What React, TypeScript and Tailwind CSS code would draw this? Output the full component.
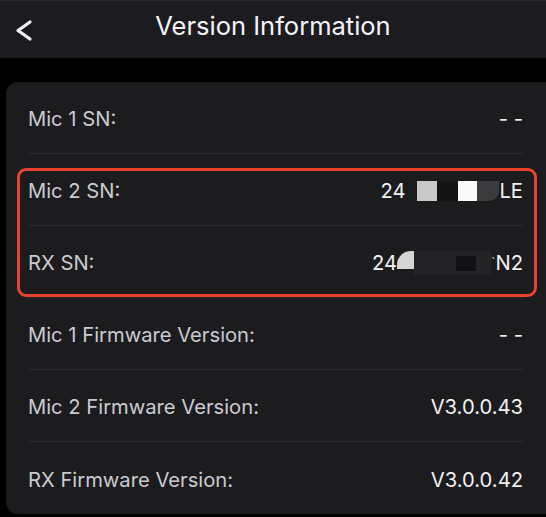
const rows = [
  { label: 'Mic 1 SN:', value: '- -' },
  { label: 'Mic 2 SN:', value: 'mic2' },
  { label: 'RX SN:', value: 'rx' },
  { label: 'Mic 1 Firmware Version:', value: '- -' },
  { label: 'Mic 2 Firmware Version:', value: 'V3.0.0.43' },
  { label: 'RX Firmware Version:', value: 'V3.0.0.42' },
]

// serials are pixelated in the screenshot, so fake the mosaic blocks
function Mic2Serial() {
  return (
    <div className="flex items-center">
      <span>24</span>
      <div className="ml-[12px] flex h-[20px] items-stretch">
        <div className="w-[20px] bg-[#c9c9c9]" />
        <div className="w-[21px] bg-[#141414]" />
        <div className="w-[19px] bg-[#fafafa]" />
        <div className="w-[22px] rounded-br-[10px] bg-[#3b3b3d]" />
      </div>
      <span>LE</span>
    </div>
  )
}

function RxSerial() {
  return (
    <div className="flex items-center">
      <span>24</span>
      <div className="flex h-[24px] items-start">
        <div className="h-[18px] w-[17px] rounded-tl-[14px] bg-[#d6d6d6]" />
        <div className="flex h-[24px] w-[77px] items-center bg-[#242427] pl-[42px]">
          <div className="h-[15px] w-[20px] bg-[#111113]" />
        </div>
      </div>
      <span className="text-[14px] leading-none text-[#bdbdbd]">`</span>
      <span>N2</span>
    </div>
  )
}

function Row({ label, value, last }: { label: string; value: string; last: boolean }) {
  return (
    <div
      className={`flex h-[72px] items-center justify-between pt-[4px] ${last ? '' : 'border-b border-[#2a2a2e]'}`}
    >
      <span className="text-[#cbcbcf]">{label}</span>
      <span className="text-[#f2f2f4]">
        {value === 'mic2' ? <Mic2Serial /> : value === 'rx' ? <RxSerial /> : value}
      </span>
    </div>
  )
}

export default function App() {
  return (
    <div
      className="flex h-[517px] w-[546px] flex-col bg-black"
      style={{ fontFamily: 'Inter, "Noto Sans", sans-serif' }}
    >
      <header className="relative flex h-[58px] items-center justify-center border-t border-[#2a2a2e] bg-[#1c1c20]">
        <svg className="absolute left-[10px] top-[13px]" width="28" height="32" viewBox="10 13 28 32">
          <polyline
            points="30,21 18,29.5 30,38"
            fill="none"
            stroke="#f4f4f4"
            strokeWidth="3.2"
            strokeLinecap="round"
            strokeLinejoin="round"
          />
        </svg>
        <h1 className="mb-[6px] text-[25.5px] font-normal text-[#f4f4f6]">Version Information</h1>
      </header>

      <div className="pt-[24px]">
        <div className="relative ml-[6px] h-[432px] rounded-l-[12px] bg-[#1c1c1f] px-[22px] pr-[23px] text-[20.2px]">
          {rows.map((r, i) => (
            <Row key={r.label} label={r.label} value={r.value} last={i === rows.length - 1} />
          ))}
          <div className="pointer-events-none absolute left-[11px] top-[86px] h-[129px] w-[520px] rounded-[9px] border-[3px] border-[#e8432d]" />
        </div>
      </div>
    </div>
  )
}
